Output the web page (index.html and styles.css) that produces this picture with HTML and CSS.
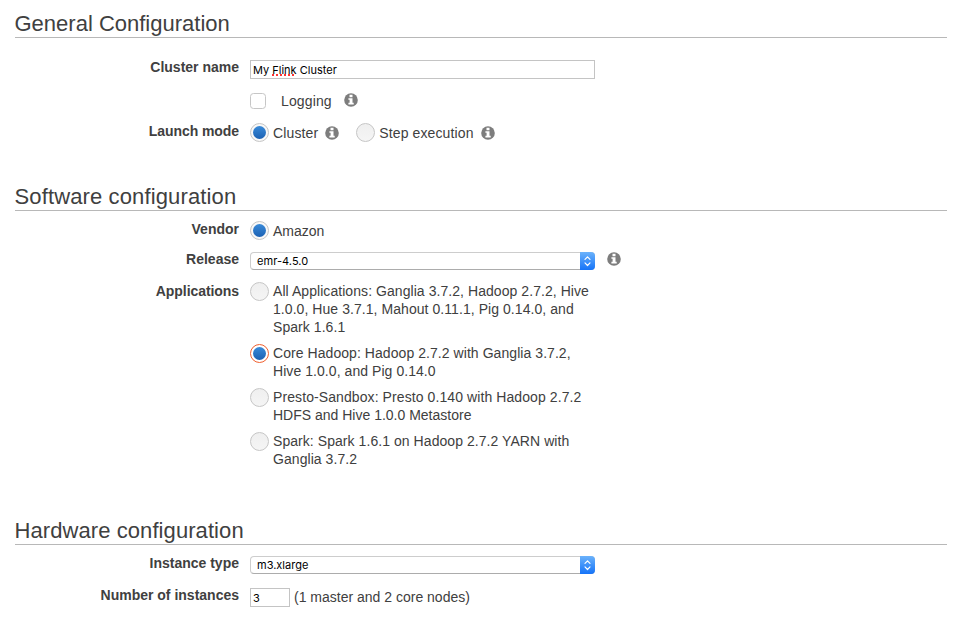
FILE: index.html
```html
<!DOCTYPE html>
<html lang="en">
<head>
<meta charset="utf-8">
<title>Create Cluster</title>
<link rel="stylesheet" href="styles.css">
</head>
<body>
<svg width="0" height="0" class="defs">
  <symbol id="info" viewBox="0 0 14 14">
    <circle cx="7" cy="7" r="6.8" fill="#7d7d7d"/>
    <path d="M5.5 1.8h3v2.4h-3zM4.4 5.2h4.1v4.5h1.2v1.7H4.4V9.7h1.2V6.8H4.4z" fill="#fff"/>
  </symbol>
  <symbol id="arrows" viewBox="0 0 15 18">
    <path d="M5 7.4l2.5-2.6 2.5 2.6M5 10.9l2.5 2.6 2.5-2.6" fill="none" stroke="#fff" stroke-width="1.2" stroke-linecap="round" stroke-linejoin="round"/>
  </symbol>
</svg>
<main>
  <section class="general">
    <h2>General Configuration</h2>
    <div class="row row-name">
      <div class="label">Cluster name</div>
      <div class="field drop2"><div class="input"><span class="sys">My <span class="misspelt">Flink</span> Cluster</span></div></div>
    </div>
    <div class="row row-logging">
      <div class="label"></div>
      <div class="field line"><i class="checkbox"></i><span class="t-logging">Logging</span><svg class="info i-logging"><use href="#info"/></svg></div>
    </div>
    <div class="row row-launch">
      <div class="label label-launch">Launch mode</div>
      <div class="field line drop2"><i class="radio on"></i><span class="t-cluster">Cluster</span><svg class="info i-cluster"><use href="#info"/></svg><i class="radio second"></i><span class="t-step">Step execution</span><svg class="info i-step"><use href="#info"/></svg></div>
    </div>
  </section>
  <section class="software">
    <h2 class="h-software">Software configuration</h2>
    <div class="row row-vendor">
      <div class="label">Vendor</div>
      <div class="field line drop2"><i class="radio on"></i><span>Amazon</span></div>
    </div>
    <div class="row row-release">
      <div class="label">Release</div>
      <div class="field with-info"><div class="select"><span class="sys release">emr-4.5.0</span><svg class="arrows"><use href="#arrows"/></svg></div><svg class="info"><use href="#info"/></svg></div>
    </div>
    <div class="row row-apps">
      <div class="label label-apps">Applications</div>
      <div class="field apps">
        <div class="app"><i class="radio"></i><p>All Applications: Ganglia 3.7.2, Hadoop 2.7.2, Hive<br>1.0.0, Hue 3.7.1, Mahout 0.11.1, Pig 0.14.0, and<br>Spark 1.6.1</p></div>
        <div class="app"><i class="radio on focus"></i><p>Core Hadoop: Hadoop 2.7.2 with Ganglia 3.7.2,<br>Hive 1.0.0, and Pig 0.14.0</p></div>
        <div class="app"><i class="radio"></i><p class="presto">Presto-Sandbox: Presto 0.140 with Hadoop 2.7.2<br><span class="plain">HDFS and Hive 1.0.0 Metastore</span></p></div>
        <div class="app"><i class="radio"></i><p>Spark: Spark 1.6.1 on Hadoop 2.7.2 YARN with<br>Ganglia 3.7.2</p></div>
      </div>
    </div>
  </section>
  <section class="hardware">
    <h2 class="h-hardware">Hardware configuration</h2>
    <div class="row row-type">
      <div class="label">Instance type</div>
      <div class="field drop2"><div class="select"><span class="sys type">m3.xlarge</span><svg class="arrows"><use href="#arrows"/></svg></div></div>
    </div>
    <div class="row row-count">
      <div class="label">Number of instances</div>
      <div class="field drop2 count"><div class="input small"><span class="sys">3</span></div><span>(1 master and 2 core nodes)</span></div>
    </div>
  </section>
</main>
</body>
</html>
```
FILE: styles.css
```css
* { box-sizing: border-box; }
body { margin: 0; background: #fff; color: #404040; font: 14px/18px "Liberation Sans", Arial, sans-serif; overflow: hidden; }
.defs { position: absolute; }
main { padding: 8px 14px 0 15px; height: 635px; }
h2 { margin: 0 0 0 0; height: 30px; border-bottom: 1px solid #b8b8b8; font-size: 22px; line-height: 32px; font-weight: 400; white-space: nowrap; text-indent: -0.5px; }
.h-software { letter-spacing: 0.13px; }
.h-hardware { letter-spacing: 0.08px; }
.general { height: 173px; }
.software { height: 334px; }
.row { display: grid; grid-template-columns: 224px 1fr; column-gap: 11px; white-space: nowrap; }
.label { font-weight: 700; text-align: right; height: 18px; }
.label-launch, .label-apps { letter-spacing: -0.07px; }
.row-name { margin-top: 20px; height: 34px; }
.row-logging { height: 30px; }
.row-vendor { margin-top: 9px; height: 30px; }
.row-release { height: 32px; }
.row-type { margin-top: 9px; height: 32px; }
.drop2 { padding-top: 2px; }
.line { display: flex; align-items: center; height: 20px; }
.row-logging .line { height: 18px; }
.input { width: 345px; height: 19px; border: 1px solid #c4c4c4; padding-left: 2px; line-height: 19px; }
.input.small { width: 40px; }
.sys { display: block; font-family: Inter, "Liberation Sans", sans-serif; font-size: 11px; color: #000; }
.misspelt { text-decoration: underline dotted #f33 2px; text-underline-offset: 0; text-decoration-skip-ink: none; }
.checkbox { width: 16px; height: 16px; border: 1px solid #c6c6c6; border-radius: 3.5px; margin: -1px 15px 0 0; }
.info { width: 14px; height: 14px; display: block; flex: none; }
.t-logging { letter-spacing: 0.13px; }
.t-cluster { letter-spacing: 0.13px; }
.t-step { letter-spacing: 0.12px; }
.i-logging { margin: -2px 0 0 12px; }
.i-cluster, .i-step { margin-left: 7px; }
.radio { width: 19px; height: 19px; flex: none; border: 1px solid #c6c6c6; border-radius: 50%; background: linear-gradient(#efefef, #f5f5f5); margin-right: 4px; display: grid; place-items: center; }
.line .radio { margin-top: -1px; }
.radio.on { background: #f8f8f8; }
.radio.on::before { content: ""; width: 13px; height: 13px; border-radius: 50%; background: linear-gradient(#398ad8, #1c61b3); }
.radio.focus { border-color: #f0602f; background: #fff; }
.radio.second { margin-left: 17px; }
.with-info { display: flex; gap: 12px; }
.with-info .select { margin-top: 2px; }
.with-info .info { margin-top: 2px; }
.select { width: 345px; height: 18px; display: flex; justify-content: space-between; border: 1px solid #cdcdcd; border-bottom-color: #acacac; border-radius: 4px; padding-left: 6px; line-height: 16px; }
.release { letter-spacing: 0.06px; }
.arrows { width: 15px; height: 18px; margin: -1px -1px 0 0; border-radius: 0 4px 4px 0; background: linear-gradient(#6bb2fb, #1573f8); }
.app { display: flex; margin-bottom: 8px; }
.app p { margin: 0; letter-spacing: 0.06px; }
.app .presto { letter-spacing: 0.09px; }
.plain { letter-spacing: 0; }
.count { display: flex; gap: 4px; }
```
